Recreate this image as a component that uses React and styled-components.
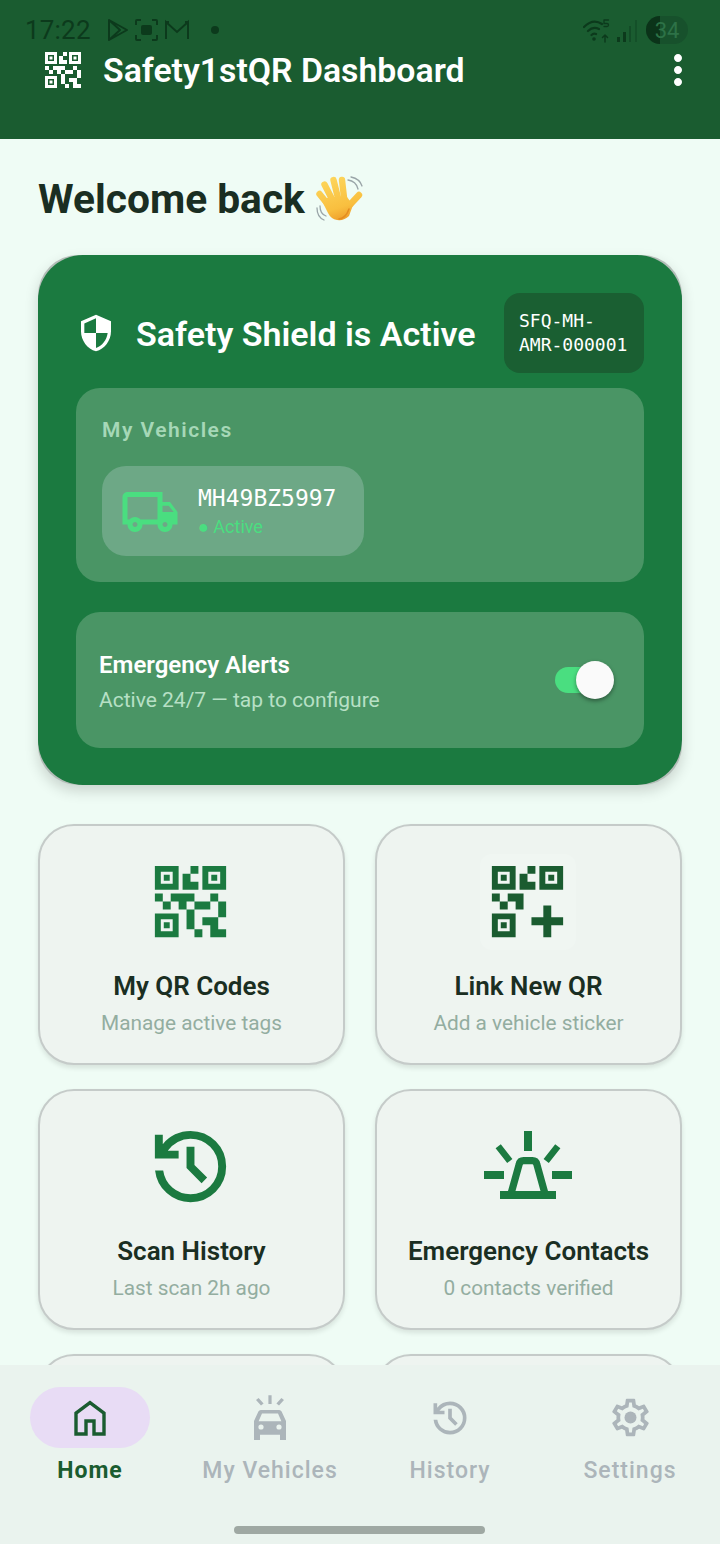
import React from 'react';
import styled, { createGlobalStyle } from 'styled-components';
import { MdQrCode2, MdMoreVert, MdSecurity, MdOutlineLocalShipping } from 'react-icons/md';

const Global = createGlobalStyle`
    html,body{
        margin:0;
        padding:0;
        background:#effcf5;
    }
    *{
        box-sizing:border-box;
    }
`

const HISTORY_D = 'M12 21q-3.45 0-6.013-2.288T3.05 13H5.1q.35 2.6 2.313 4.3T12 19q2.925 0 4.963-2.038T19 12q0-2.925-2.038-4.963T12 5q-1.725 0-3.225.8T6.25 8H9v2H3V4h2v2.35q1.275-1.6 3.113-2.475T12 3q3.75 0 6.375 2.625T21 12q0 3.75-2.625 6.375T12 21Zm2.8-4.8L11 12.4V7h2v4.6l3.2 3.2-1.4 1.4Z';

function HistoryIcon({ size }) {
    return (
        <svg width={size} height={size} viewBox="0 0 24 24" fill="currentColor">
            <path d={HISTORY_D} />
        </svg>
    )
}

function QrAddIcon() {
    return (
        <svg width="95" height="95" viewBox="0 0 24 24" fill="currentColor">
            <path fillRule="evenodd" d="M3 3h6v6H3z M4.5 4.5v3h3v-3z M15 3h6v6h-6z M16.5 4.5v3h3v-3z M3 15h6v6H3z M4.5 16.5v3h3v-3z" />
            <path d="M5.25 5.25h1.5v1.5h-1.5z M17.25 5.25h1.5v1.5h-1.5z M5.25 17.25h1.5v1.5h-1.5z M12 3h2v2h-2z M14 9V7h-2V5h-2v4z M3 10h2v2H3z M5 12h2v2H5z M11 10H7v2h2v2h2z M16 13h2v3h3v2h-3v3h-2v-3h-3v-2h3z" />
        </svg>
    )
}

function SirenIcon() {
    return (
        <svg width="96" height="96" viewBox="0 0 24 24" fill="currentColor">
            <path d="M11 3h2v5h-2z M1 13h5v2H1z M18 13h5v2h-5z M5 18h14v2H5z" />
            <path d="M3.900 7.300l1.300-1 2.900 3.700-1.300 1z M20.100 7.300l-1.300-1-2.900 3.700 1.300 1z" />
            <path d="M7.800 18.500 9.800 11.300q.2-.9 1.100-.9h2.200q.9 0 1.100.9l2 7.200" fill="none" stroke="currentColor" strokeWidth="1.800" />
        </svg>
    )
}

function HomeIcon() {
    return (
        <svg width="48" height="48" viewBox="0 0 24 24" fill="none" stroke="currentColor" strokeWidth="1.700">
            <path d="M12 4.300 5 9.600V20h5v-6.500h4V20h5V9.600z" />
        </svg>
    )
}

function CarAlertIcon() {
    return (
        <svg width="48" height="48" viewBox="0 0 24 24" fill="currentColor">
            <path d="M11.200.6h1.600v4.400h-1.600z M5 3l1.300-1 2.500 2.800-1.300 1z M19 3l-1.300-1-2.500 2.800 1.300 1z" />
            <path fillRule="evenodd" d="M7.400 8h9.200q.8 0 1.200.8L20 13.500V23h-3v-2.600H7V23H4v-9.500l2.200-4.700q.4-.8 1.200-.8z M8 9.800l-1.700 3.800h11.400L16 9.800z M7.500 15.200a1.300 1.300 0 1 0 0 2.600 1.300 1.300 0 0 0 0-2.600z M16.500 15.200a1.300 1.300 0 1 0 0 2.600 1.300 1.300 0 0 0 0-2.600z" />
        </svg>
    )
}

function GearIcon() {
    return (
        <svg width="45" height="45" viewBox="0 0 24 24" fill="currentColor">
            <path d="M19.43 12.98c.04-.32.07-.64.07-.98 0-.34-.03-.66-.07-.98l2.11-1.65c.19-.15.24-.42.12-.64l-2-3.46c-.09-.16-.26-.25-.44-.25-.06 0-.12.01-.17.03l-2.49 1c-.52-.4-1.08-.73-1.69-.98l-.38-2.65C14.46 2.18 14.25 2 14 2h-4c-.25 0-.46.18-.49.42l-.38 2.65c-.61.25-1.17.59-1.69.98l-2.49-1c-.06-.02-.12-.03-.18-.03-.17 0-.34.09-.43.25l-2 3.46c-.13.22-.07.49.12.64l2.11 1.65c-.04.32-.07.65-.07.98 0 .33.03.66.07.98l-2.11 1.65c-.19.15-.24.42-.12.64l2 3.46c.09.16.26.25.44.25.06 0 .12-.01.17-.03l2.49-1c.52.4 1.08.73 1.69.98l.38 2.65c.03.24.24.42.49.42h4c.25 0 .46-.18.49-.42l.38-2.65c.61-.25 1.17-.59 1.69-.98l2.49 1c.06.02.12.03.18.03.17 0 .34-.09.43-.25l2-3.46c.12-.22.07-.49-.12-.64l-2.11-1.65zm-1.98-1.71c.04.31.05.52.05.73 0 .21-.02.43-.05.73l-.14 1.13.89.7 1.08.84-.7 1.21-1.27-.51-1.04-.42-.9.68c-.43.32-.84.56-1.25.73l-1.06.43-.16 1.13-.2 1.35h-1.4l-.19-1.35-.16-1.13-1.06-.43c-.43-.18-.83-.41-1.23-.71l-.91-.7-1.06.43-1.27.51-.7-1.21 1.08-.84.89-.7-.14-1.13c-.03-.31-.05-.54-.05-.74s.02-.43.05-.73l.14-1.13-.89-.7-1.08-.84.7-1.21 1.27.51 1.04.42.9-.68c.43-.32.84-.56 1.25-.73l1.06-.43.16-1.13.2-1.35h1.39l.19 1.35.16 1.13 1.06.43c.43.18.83.41 1.23.71l.91.7 1.06-.43 1.27-.51.7 1.21-1.07.85-.89.7.14 1.13z" />
            <circle cx="12" cy="12" r="3.200" />
        </svg>
    )
}

function WaveHand() {
    return (
        <svg width="50" height="48" viewBox="0 0 50 48">
            <defs>
                <linearGradient id="hand" gradientUnits="userSpaceOnUse" x1="14" y1="2" x2="28" y2="46">
                    <stop offset="0" stopColor="#fdd65c" />
                    <stop offset=".7" stopColor="#f9bf3f" />
                    <stop offset="1" stopColor="#ee9c2a" />
                </linearGradient>
            </defs>
            <g fill="none" stroke="url(#hand)" strokeLinecap="round" strokeWidth="6.400">
                <path d="M4.500 19 15 32" />
                <path d="M9.500 9.500 19 28" />
                <path d="M18.500 5 24 27" />
                <path d="M27 5 29.500 27" />
                <path d="M44 20 31 34" />
            </g>
            <path fill="url(#hand)" d="M7 26 14 22 32 22 38 30 34 41Q29 46 22 45 16 44 13 38z" />
            <path d="M24 44Q31 43 34 34" fill="none" stroke="#e48d20" strokeWidth="1.600" strokeLinecap="round" />
            <g fill="none" stroke="#9aa5a8" strokeWidth="1.300" strokeLinecap="round">
                <path d="M33 5Q41 6 43 14" />
                <path d="M36 2Q45 4 47 11" />
                <path d="M5 31Q5 39 11 41" />
                <path d="M2 33Q2 42 9 45" />
            </g>
        </svg>
    )
}

const tiles = [
    { title: 'My QR Codes', sub: 'Manage active tags', icon: <MdQrCode2 size={95} /> },
    { title: 'Link New QR', sub: 'Add a vehicle sticker', icon: <QrAddIcon />, boxed: true },
    { title: 'Scan History', sub: 'Last scan 2h ago', icon: <HistoryIcon size={95} /> },
    { title: 'Emergency Contacts', sub: '0 contacts verified', icon: <SirenIcon /> },
]

const tabs = [
    { label: 'Home', icon: <HomeIcon />, active: true },
    { label: 'My Vehicles', icon: <CarAlertIcon /> },
    { label: 'History', icon: <HistoryIcon size={44} /> },
    { label: 'Settings', icon: <GearIcon /> },
]

function App() {
    return (
        <Screen>
            <Global />
            <Header>
                <StatusBar>
                    <StatusGroup>
                        <Clock>17:22</Clock>
                        <svg width="22" height="24" viewBox="0 0 22 24" fill="none" stroke="currentColor" strokeWidth="2" strokeLinejoin="round">
                            <path d="M2 2 20 12 2 22z M2 2 13 12 2 22" />
                        </svg>
                        <svg width="25" height="24" viewBox="0 0 25 24" fill="none" stroke="currentColor" strokeWidth="2">
                            <path d="M2 7V3q0-1 1-1h4 M18 2h4q1 0 1 1v4 M23 17v4q0 1-1 1h-4 M7 22H3q-1 0-1-1v-4" />
                            <rect x="7" y="7" width="11" height="10" rx="2" fill="currentColor" stroke="none" />
                        </svg>
                        <svg width="26" height="22" viewBox="0 0 26 22" fill="none" stroke="currentColor" strokeWidth="2">
                            <path d="M2 20V3l11 10L24 3v17 M2 3h3 M24 3h-3" />
                        </svg>
                        <Dot />
                    </StatusGroup>
                    <StatusGroup>
                        <svg width="28" height="26" viewBox="0 0 28 26" fill="none" stroke="currentColor" strokeWidth="2.200" strokeLinecap="round">
                            <path d="M1 10Q10 1 19 7 M5 14Q10 9 16 12 M8.500 18Q10.500 16 13 17" />
                            <circle cx="11" cy="22" r="1.800" fill="currentColor" stroke="none" />
                            <path d="M22 25v-7 M19.500 20.500 22 18l2.500 2.500" strokeWidth="1.500" />
                            <path d="M21 3h4.500 M21 3v3.500h3q1.500 0 1.500 1.500t-1.500 1.500H21" strokeWidth="1.300" />
                        </svg>
                        <Signal>
                            <svg width="22" height="26" viewBox="0 0 22 26" fill="currentColor">
                                <rect x="1" y="20" width="3" height="5" />
                                <rect x="7" y="15" width="3" height="10" />
                                <rect x="13" y="9" width="2" height="16" opacity=".45" />
                                <rect x="19" y="3" width="2" height="22" opacity=".35" />
                            </svg>
                        </Signal>
                        <Battery>
                            <BatteryFill />
                            <BatteryText>34</BatteryText>
                        </Battery>
                    </StatusGroup>
                </StatusBar>
                <TitleRow>
                    <TitleLeft>
                        <MdQrCode2 size={48} color="#fff" />
                        <AppTitle>Safety1stQR Dashboard</AppTitle>
                    </TitleLeft>
                    <MdMoreVert size={48} color="#fff" />
                </TitleRow>
            </Header>
            <Main>
                <Welcome>
                    Welcome back
                    <WaveHand />
                </Welcome>
                <Hero>
                    <HeroBody>
                        <HeroTop>
                            <ShieldWrap>
                                <MdSecurity size={40} color="#fff" />
                            </ShieldWrap>
                            <HeroTitle>Safety Shield is Active</HeroTitle>
                            <CodeBadge>SFQ-MH-<br />AMR-000001</CodeBadge>
                        </HeroTop>
                        <VehiclesPanel>
                            <PanelLabel>My Vehicles</PanelLabel>
                            <VehicleChip>
                                <MdOutlineLocalShipping size={60} color="#4ade80" />
                                <div>
                                    <Plate>MH49BZ5997</Plate>
                                    <PlateStatus>● Active</PlateStatus>
                                </div>
                            </VehicleChip>
                        </VehiclesPanel>
                        <AlertsPanel>
                            <AlertsText>
                                <AlertsTitle>Emergency Alerts</AlertsTitle>
                                <AlertsSub>Active 24/7 — tap to configure</AlertsSub>
                            </AlertsText>
                            <Toggle>
                                <Thumb />
                            </Toggle>
                        </AlertsPanel>
                    </HeroBody>
                </Hero>
                <TileGrid>
                    {tiles.map((t) => (
                        <Tile key={t.title}>
                            <TileIcon $boxed={t.boxed}>{t.icon}</TileIcon>
                            <TileTitle>{t.title}</TileTitle>
                            <TileSub>{t.sub}</TileSub>
                        </Tile>
                    ))}
                    <Tile />
                    <Tile />
                </TileGrid>
            </Main>
            <Nav>
                <Tabs>
                    {tabs.map((t) => (
                        <Tab key={t.label}>
                            <TabPill $active={t.active}>{t.icon}</TabPill>
                            <TabLabel $active={t.active}>{t.label}</TabLabel>
                        </Tab>
                    ))}
                </Tabs>
                <GestureBar />
            </Nav>
        </Screen>
    )
}

const Screen = styled.div`
    width:720px;
    height:1544px;
    overflow:hidden;
    display:flex;
    flex-direction:column;
    background:#effcf5;
    font-family:Roboto,"Liberation Sans",sans-serif;
`
const Header = styled.header`
    flex:none;
    height:139px;
    background:#1a5c30;
    padding-top:10px;
`
const StatusBar = styled.div`
    height:40px;
    padding:0 32px 0 25px;
    display:flex;
    justify-content:space-between;
    align-items:center;
    color:#0c3a1c;
`
const StatusGroup = styled.div`
    display:flex;
    align-items:center;
    gap:5px;
`
const Clock = styled.span`
    font-size:26px;
    margin-right:11px;
    letter-spacing:.2px;
`
const Dot = styled.span`
    width:8px;
    height:8px;
    border-radius:50%;
    background:currentColor;
    margin-left:16px;
`
const Signal = styled.span`
    display:flex;
    margin-right:3px;
`
const Battery = styled.div`
    position:relative;
    width:42px;
    height:28px;
    border-radius:14px;
    overflow:hidden;
    background:#17512c;
    display:flex;
    align-items:center;
    justify-content:center;
`
const BatteryFill = styled.div`
    position:absolute;
    left:0;
    top:0;
    bottom:0;
    width:14px;
    background:#0b3319;
`
const BatteryText = styled.span`
    position:relative;
    font-size:22px;
    color:#2d7247;
`
const TitleRow = styled.div`
    height:40px;
    padding:0 18px 0 39px;
    display:flex;
    justify-content:space-between;
    align-items:center;
`
const TitleLeft = styled.div`
    display:flex;
    align-items:center;
    gap:16px;
`
const AppTitle = styled.h1`
    margin:0;
    color:#fff;
    font-size:33.800px;
    font-weight:600;
`
const Main = styled.main`
    flex:1;
    min-height:0;
    overflow:hidden;
    padding:0 38px;
`
const Welcome = styled.h2`
    margin:0;
    height:116px;
    padding-top:4px;
    display:flex;
    align-items:center;
    gap:10px;
    font-size:40.700px;
    font-weight:700;
    color:#1a2e22;
`
const Hero = styled.section`
    height:530px;
    border-radius:40px;
    overflow:hidden;
    background:#b4bdb8;
    box-shadow:0 6px 14px rgba(0,0,0,.16);
`
const HeroBody = styled.div`
    height:100%;
    border-radius:45px;
    background:#1b7a40;
    padding:38px 38px 37px;
`
const HeroTop = styled.div`
    display:flex;
    align-items:center;
    height:80px;
`
const ShieldWrap = styled.div`
    display:flex;
    margin-right:20px;
`
const HeroTitle = styled.h3`
    flex:1;
    margin:0;
    padding-top:2px;
    color:#fff;
    font-size:34px;
    font-weight:600;
`
const CodeBadge = styled.div`
    width:140px;
    height:80px;
    padding:16px 15px 0;
    border-radius:16px;
    background:#1a5f32;
    color:#fff;
    font-family:"DejaVu Sans Mono",monospace;
    font-size:18px;
    line-height:24px;
`
const VehiclesPanel = styled.div`
    height:194px;
    margin-top:15px;
    padding:26px 26px 0;
    border-radius:24px;
    background:#4a9565;
`
const PanelLabel = styled.div`
    color:#a6d8b7;
    font-size:21px;
    font-weight:600;
    letter-spacing:1.500px;
    line-height:32px;
`
const VehicleChip = styled.div`
    width:262px;
    height:90px;
    margin-top:20px;
    padding:2px 20px 0 18px;
    border-radius:24px;
    background:#6da886;
    display:flex;
    align-items:center;
    gap:18px;
`
const Plate = styled.div`
    color:#fff;
    font-family:"DejaVu Sans Mono",monospace;
    font-size:23px;
    line-height:28px;
`
const PlateStatus = styled.div`
    margin-top:2px;
    color:#4ade80;
    font-size:18px;
    line-height:26px;
`
const AlertsPanel = styled.div`
    height:136px;
    margin-top:30px;
    padding:0 29px 0 23px;
    border-radius:24px;
    background:#4a9565;
    display:flex;
    align-items:center;
    justify-content:space-between;
`
const AlertsText = styled.div`
    padding-top:5px;
`
const AlertsTitle = styled.div`
    color:#fff;
    font-size:24px;
    font-weight:600;
    line-height:35px;
`
const AlertsSub = styled.div`
    color:#b7e0c5;
    font-size:21px;
    line-height:35px;
`
const Toggle = styled.div`
    position:relative;
    width:46px;
    height:26px;
    border-radius:13px;
    background:#4ade80;
    margin-right:14px;
`
const Thumb = styled.div`
    position:absolute;
    left:21px;
    top:-6px;
    width:38px;
    height:38px;
    border-radius:50%;
    background:#fafafa;
    box-shadow:0 2px 4px rgba(0,0,0,.4);
`
const TileGrid = styled.div`
    margin-top:39px;
    display:grid;
    grid-template-columns:307px 307px;
    grid-auto-rows:241px;
    column-gap:30px;
    row-gap:24px;
`
const Tile = styled.div`
    border-radius:36px;
    border:2px solid #c5cbc9;
    background:#eef4f0;
    box-shadow:0 3px 5px rgba(0,0,0,.1);
    padding-top:28px;
    display:flex;
    flex-direction:column;
    align-items:center;
`
const TileIcon = styled.div`
    width:96px;
    height:96px;
    margin-right:2px;
    display:flex;
    color:${(p) => (p.$boxed ? '#1a5c30' : '#1b7a40')};
    background:${(p) => (p.$boxed ? '#f0f6f2' : 'transparent')};
    border-radius:12px;
`
const TileTitle = styled.div`
    margin-top:18px;
    color:#1a2e22;
    font-size:26px;
    font-weight:600;
    line-height:36px;
`
const TileSub = styled.div`
    margin-top:1px;
    color:#93ada0;
    font-size:20.800px;
    line-height:36px;
`
const Nav = styled.nav`
    position:relative;
    flex:none;
    height:179px;
    background:#eaf3ee;
    padding-top:22px;
`
const Tabs = styled.div`
    display:grid;
    grid-template-columns:repeat(4,180px);
`
const Tab = styled.div`
    display:flex;
    flex-direction:column;
    align-items:center;
`
const TabPill = styled.div`
    width:120px;
    height:61px;
    border-radius:31px;
    display:flex;
    align-items:center;
    justify-content:center;
    background:${(p) => (p.$active ? '#e8dcf5' : 'transparent')};
    color:${(p) => (p.$active ? '#1a5c30' : '#acb5ba')};
`
const TabLabel = styled.div`
    margin-top:7px;
    font-size:23px;
    font-weight:${(p) => (p.$active ? 700 : 500)};
    letter-spacing:1px;
    line-height:32px;
    color:${(p) => (p.$active ? '#1a5c30' : '#acb5ba')};
`
const GestureBar = styled.div`
    position:absolute;
    left:234px;
    bottom:10px;
    width:251px;
    height:8px;
    border-radius:4px;
    background:#9fa8a3;
`

export default App;
